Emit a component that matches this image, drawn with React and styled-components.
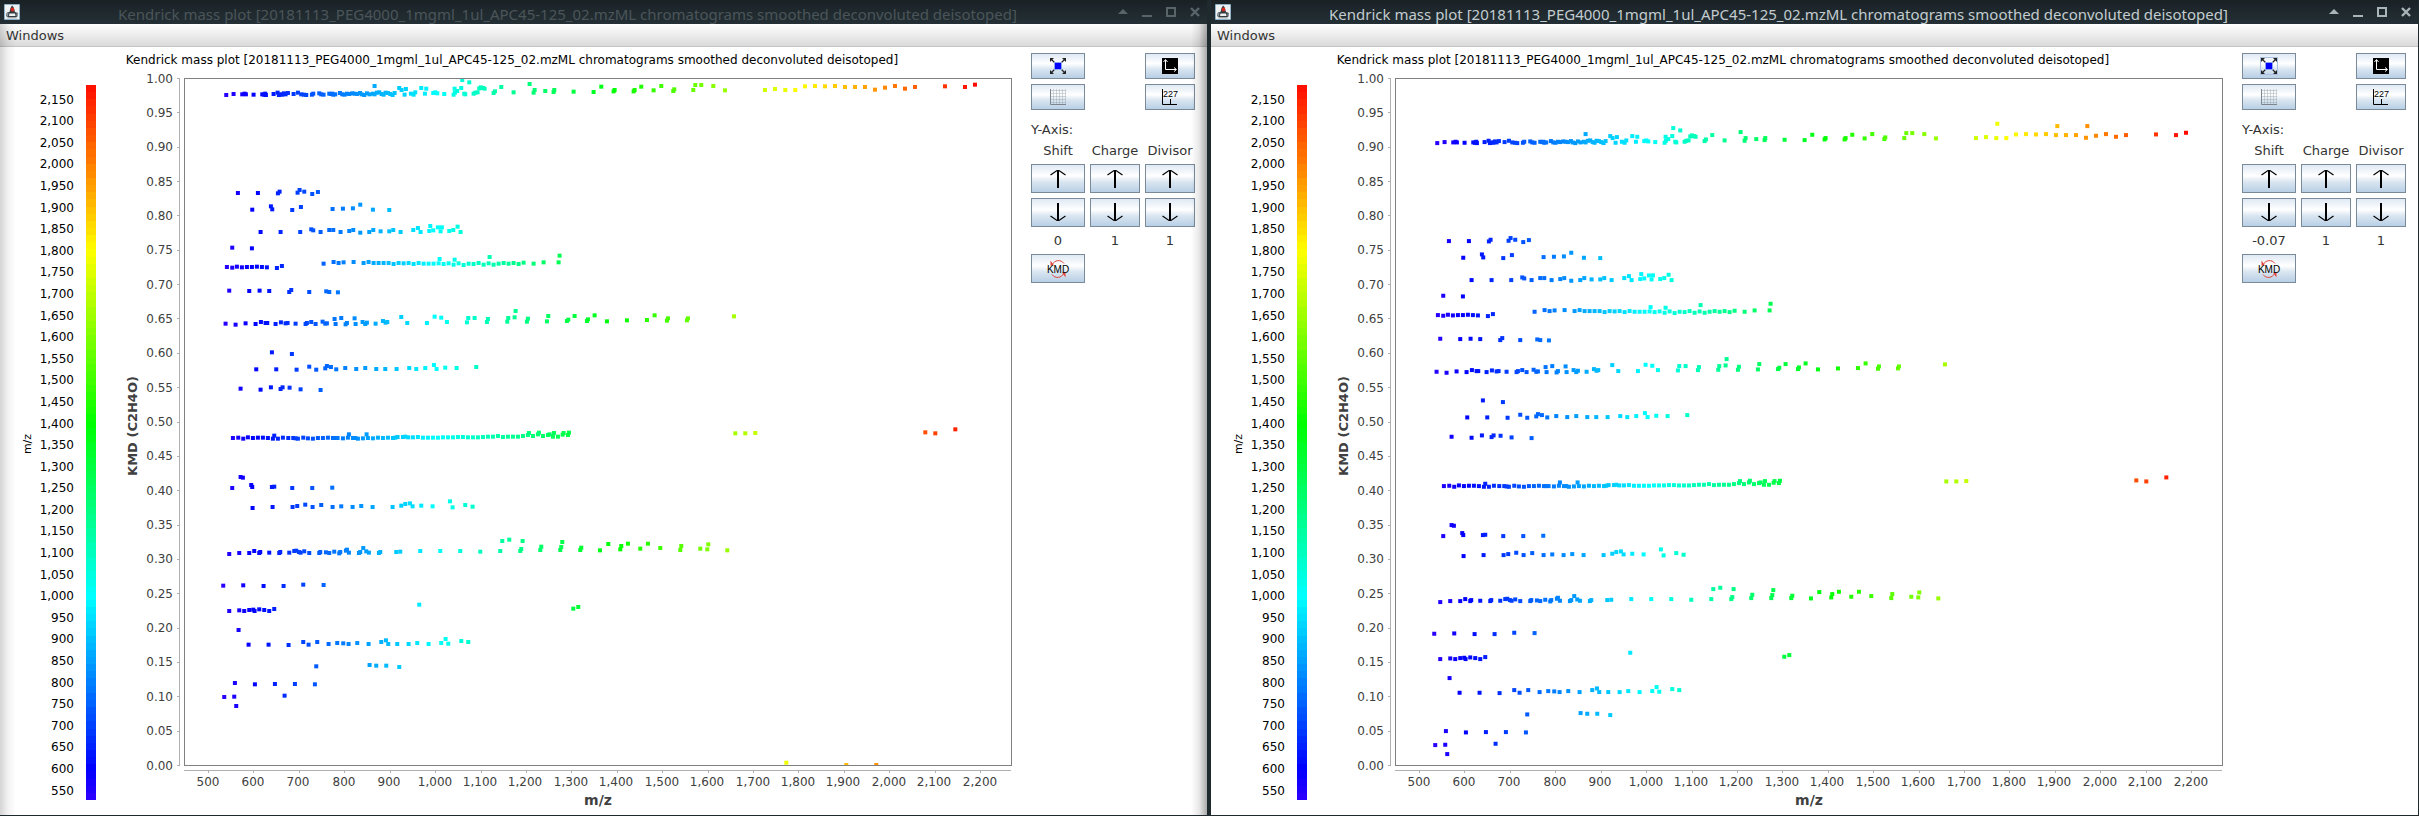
import React, { useLayoutEffect, useRef, useState } from 'react';
import styled, { createGlobalStyle } from 'styled-components';

const GlobalStyle = createGlobalStyle`
  * { box-sizing: border-box; }
  body {
    margin: 0;
    background: #1f2a2f;
    font-family: "DejaVu Sans", Verdana, sans-serif;
    font-size: 13px;
    color: #333;
  }
`;

const TITLE =
  'Kendrick mass plot [20181113_PEG4000_1mgml_1ul_APC45-125_02.mzML chromatograms smoothed deconvoluted deisotoped]';

/* ---------- feature data ---------- */

const BANDS = [
  { origin: 60, cells: [
    78,105,100,102,126,103,133,101,137,103,160,104,186,103,191,104,195,101,197,105,220,102,232,98,236,105,240,103,
    246,104,251,100,256,103,263,99,280,102,293,98,303,103,311,104,318,105,335,104,339,101,357,100,363,103,370,104,
    387,101,392,102,399,104,405,103,396,101,419,99,426,103,433,104,440,101,447,102,456,100,463,101,470,102,479,99,
    484,103,492,105,500,100,508,103,518,101,523,78,523,103,530,98,537,97,544,102,550,104,556,98,563,99,570,102,
    577,105,583,99,597,84,604,90,617,87,613,104,632,101,640,104,645,97,663,84,678,86,674,101,699,99,705,97,711,100,
    732,102,763,86,783,84,786,60,760,104,764,98,771,93,792,101,795,103,807,67,820,101,825,98,832,97,837,85,842,82,
    848,84,853,86,880,99,884,94,903,81,940,97,988,72,1000,98,1003,90,1035,93,1060,96,1062,90,1120,95,1180,96,
    1203,80,1240,94,1243,90,1300,94,1303,90,1323,80,1360,91,1383,78,1419,93,1422,88,1479,90,1485,75,1503,75,
    1539,78,1574,91,1694,90,1724,87,1755,90,1785,90,1814,79,1844,78,1874,79,1904,78,1934,81,1964,81,1994,81,
    2024,89,2054,83,2084,78,2114,86,2144,81,2234,79,2294,81,2324,74,
    113,399,173,399,233,400,238,395,292,398,298,390,312,395,336,402,353,396,
    156,449,212,439,216,448,276,450,302,441,397,447,428,446,458,445,480,434,518,449,567,450,
    181,516,241,516,300,516,333,508,339,511,361,516,387,510,399,510,421,516,447,513,459,510,480,518,507,516,
    519,510,541,514,567,514,579,510,601,516,639,510,653,504,661,516,687,513,690,498,699,511,713,502,725,502,
    721,514,747,513,759,510,772,500,781,516,
  ] },
  { origin: 240, cells: [
    96,23,155,25,
    80,81,96,83,110,80,125,82,140,81,155,81,170,80,185,81,200,82,230,84,245,78,370,71,400,66,415,69,430,67,460,66,
    490,69,505,66,520,69,535,69,550,69,565,69,580,72,595,69,610,70,625,69,640,72,655,69,670,71,685,71,700,71,
    715,70,718,57,730,72,745,70,760,74,763,59,775,70,790,75,805,71,820,72,835,69,850,74,865,70,868,51,880,74,
    895,71,910,69,925,71,940,69,955,72,970,68,1000,71,1030,67,1075,67,1078,47,
    87,152,147,153,178,152,207,153,267,156,273,150,327,156,378,154,387,156,413,157,
    76,251,106,254,136,250,166,252,182,246,196,249,201,249,226,252,242,247,256,250,262,249,286,251,316,252,
    320,249,333,246,346,252,367,245,375,251,380,250,403,237,406,252,423,234,436,253,440,249,463,235,466,252,
    487,246,495,252,500,248,526,251,548,243,556,248,561,246,603,231,621,249,680,249,703,230,723,233,740,246,
    800,247,804,234,823,234,860,246,863,237,921,245,924,234,943,232,946,213,980,245,983,236,1040,244,1044,228,
    1100,243,1104,239,1123,228,1160,243,1163,238,1183,226,1220,244,1280,241,1340,240,1363,226,1400,242,1403,235,
    1460,241,1463,235,1601,229,
    215,337,275,342,
    168,388,228,388,289,389,327,380,348,389,375,385,380,378,392,381,408,388,435,384,468,387,495,384,528,387,
    555,387,589,387,627,384,648,387,675,384,701,375,709,387,735,383,769,384,828,381,
    121,446,181,449,212,442,241,447,247,442,268,443,301,448,361,450,
  ] },
  { origin: 430, cells: [
    98,24,114,23,129,26,143,22,158,24,173,23,188,23,203,24,218,26,222,17,233,26,248,23,264,24,279,24,286,25,293,26,
    309,23,323,25,338,26,353,24,368,24,383,23,398,24,405,24,412,24,428,25,443,23,446,13,458,24,465,24,473,26,
    488,25,499,13,503,24,518,25,533,23,548,24,563,23,578,24,585,23,592,21,608,21,615,20,624,22,638,22,653,21,
    668,23,683,23,698,23,713,23,728,22,743,22,758,22,773,21,788,21,803,22,818,22,833,22,848,21,863,20,878,20,
    893,18,908,21,923,20,938,20,953,20,968,18,983,15,986,9,998,18,1013,13,1016,8,1028,18,1043,15,1048,13,
    1058,20,1061,9,1073,20,1087,14,1090,9,1103,15,1106,8,1605,10,1635,10,1665,9,2175,7,2205,10,2265,-2,
    96,174,121,141,128,143,153,165,156,171,215,171,222,170,276,174,336,174,396,173,
    157,234,217,231,277,231,291,228,315,224,337,231,363,225,397,231,423,229,457,231,483,228,517,231,577,231,
    603,227,615,222,629,220,637,229,663,227,697,229,749,214,757,232,795,225,817,230,
    87,372,117,369,147,369,162,363,177,369,180,366,207,368,237,369,240,366,267,368,282,363,288,362,296,366,
    301,368,312,364,327,369,357,369,360,366,377,367,387,369,402,365,417,370,420,366,437,362,440,359,446,368,
    476,369,480,366,489,354,498,364,506,368,536,369,540,366,588,366,600,365,660,363,720,363,780,363,840,365,
    900,363,906,333,927,329,967,333,960,363,963,357,1020,360,1023,350,1080,360,1083,351,1086,336,1140,360,
    1143,353,1199,361,1224,342,1260,358,1263,348,1283,341,1320,356,1343,341,1380,354,1440,360,1443,348,
    1500,356,1521,358,1524,343,1581,361,
  ] },
  { origin: 560, cells: [
    69,77,129,76,190,78,250,78,309,74,370,75,
    87,153,117,151,132,153,147,150,159,149,163,153,177,148,192,150,207,153,222,147,657,134,1119,146,1134,141,
    115,210,
    145,254,205,254,265,255,309,246,325,254,351,246,385,252,411,249,429,250,445,252,471,249,505,252,543,246,
    557,241,564,252,591,252,625,252,651,249,685,252,723,249,736,237,744,251,783,243,804,246,
    348,319,508,315,528,317,558,317,597,321,
    104,369,164,373,224,372,284,372,344,373,
    72,411,102,410,253,407,108,438,
    1758,608,1938,615,2028,615,
  ] },
];

const toFeatures = (bands) =>
  bands.flatMap(({ origin, cells }) => {
    const out = [];
    for (let i = 0; i < cells.length; i += 2) {
      out.push({
        mz: 500 + (cells[i] - 25) / 1.3623,
        kmd: 1 - (origin * 3 + cells[i + 1] - 235.5) / 2061,
      });
    }
    return out;
  });

const FEATURES = toFeatures(BANDS);

const MZ_MIN = 447;
const MZ_MAX = 2268;
const LEGEND_MIN = 528;
const LEGEND_MAX = 2184;

const massColor = (mz) => `hsl(${Math.max(0, Math.round(240 - (mz - 600) * 0.15))}, 100%, 50%)`;
const range = (from, to, step) =>
  Array.from({ length: Math.round((to - from) / step) + 1 }, (_, i) => from + i * step);
const thousands = (n) => n.toLocaleString('en-US');

/* ---------- page ---------- */

const Desktop = styled.div`
  display: flex;
  gap: 4px;
  min-height: 100vh;
  padding: 0 1px 1px 0;
  background: #1f2a2f;
`;

const Frame = styled.section`
  position: relative;
  flex: 1 1 0;
  min-width: 0;
  display: flex;
  flex-direction: column;
  background: #fff;
`;

const SideShadow = styled.div`
  position: absolute;
  top: 24px;
  bottom: 0;
  width: 16px;
  pointer-events: none;
  ${(p) =>
    p.$side === 'left'
      ? 'left: 0; background: linear-gradient(to right, rgba(0,0,0,.17), rgba(0,0,0,.05) 50%, transparent);'
      : 'right: 0; background: linear-gradient(to left, rgba(0,0,0,.33), rgba(0,0,0,.09) 50%, transparent);'}
`;

const TitleBar = styled.header`
  display: flex;
  align-items: center;
  height: 24px;
  background: linear-gradient(#1a2125, #243036);
  color: ${(p) => (p.$active ? '#c3cccf' : '#4b5559')};
`;

const AppIcon = styled.span`
  width: 24px;
  height: 24px;
  padding: 4px;
  svg { display: block; }
`;

const TitleText = styled.h1`
  flex: 1;
  min-width: 0;
  margin: 0;
  padding-top: 4px;
  overflow: hidden;
  text-align: center;
  white-space: nowrap;
  font: 400 15px/20px "Noto Sans", sans-serif;
`;

const FrameButton = styled.button`
  width: 24px;
  height: 24px;
  padding: 0;
  border: 0;
  background: none;
  color: ${(p) => (p.$active ? '#a9b4b8' : '#59646a')};
  svg { display: block; margin: 0 auto; }
`;

const MenuBar = styled.nav`
  height: 23px;
  padding-left: 6px;
  background: linear-gradient(#fff, #dadada);
  border-bottom: 1px solid #c4c4c4;
`;

const MenuButton = styled.button`
  height: 22px;
  padding: 0;
  border: 0;
  background: none;
  color: #333;
  font: inherit;
`;

const Content = styled.main`
  flex: 1;
  display: flex;
  min-height: 500px;
`;

const ChartArea = styled.div`
  flex: 1;
  min-width: 0;
  overflow: hidden;
  svg { display: block; }
`;

const Controls = styled.aside`
  display: grid;
  grid-template-columns: 54px 50px 50px;
  grid-template-rows: 26px 26px 23px 16px 29px 29px 17px 29px;
  gap: 5px;
  padding: 6px 12px 6px 7px;
`;

const ToolButton = styled.button`
  display: grid;
  place-items: center;
  grid-column: ${(p) => p.$col};
  padding: 0;
  border: 1px solid #7a8a99;
  background: linear-gradient(#dfe9f4, #fff 40%, #dae6f1 62%, #b8cfe5);
  svg { display: block; outline: ${(p) => (p.$focused ? '1px solid #a9c0e0' : 'none')}; }
`;

const AxisHeading = styled.div`
  grid-column: 1 / -1;
  padding-top: 6px;
  line-height: 17px;
`;

const ColumnLabel = styled.label`
  text-align: center;
  line-height: 16px;
  white-space: nowrap;
`;

const Value = styled.output`
  text-align: center;
  line-height: 17px;
`;

/* ---------- icons ---------- */

const JavaIcon = () => (
  <svg width="16" height="16" viewBox="0 0 16 16" aria-hidden="true">
    <rect width="16" height="16" rx="1" fill="#8fb2c9" />
    <rect x="1" y="1" width="14" height="14" fill="#eef1f2" />
    <path d="M8 1.500 L9.500 3 L11 8 L14 9 V12 L11.500 13.500 H4.500 L2 12 L3 8.500 L5.500 8 L6.500 4 Z" fill="#343b40" />
    <path d="M2 9 L4.500 9 L4 12.500 L2.500 12 Z M12.500 9 L14 9.500 V12 H12.500 Z" fill="#8b979c" />
    <path d="M5.500 9.500 H11 L11.500 12 H5 Z" fill="#eef1f2" />
    <path d="M3 14 H13" stroke="#aeb8bd" />
    <ellipse cx="8.500" cy="5.500" rx="1.800" ry="2" fill="#d8261e" />
  </svg>
);

const FRAME_ICONS = {
  Shade: <path d="M0 7 L5 2 L10 7 Z" fill="currentColor" />,
  Minimize: <path d="M0 8 H10 V10 H0 Z" fill="currentColor" />,
  Maximize: <path d="M1 1 H9 V9 H1 Z" fill="none" stroke="currentColor" strokeWidth="2" />,
  Close: <path d="M1 1 L9 9 M9 1 L1 9" fill="none" stroke="currentColor" strokeWidth="2.400" />,
};

const FitIcon = () => (
  <svg width="16" height="16" viewBox="0 0 16 16" aria-hidden="true">
    <path d="M1 1 L4.500 4.500 M15 1 L11.500 4.500 M1 15 L4.500 11.500 M15 15 L11.500 11.500" stroke="#222" strokeWidth="1.200" />
    <path d="M0 0 H4 L0 4 Z M16 0 H12 L16 4 Z M0 16 H4 L0 12 Z M16 16 H12 L16 12 Z" fill="#222" />
    <rect x="4" y="4" width="8" height="8" fill="#8aa6f0" />
    <rect x="5" y="5" width="6" height="6" fill="#0000ff" />
  </svg>
);

const AxesIcon = () => (
  <svg width="16" height="16" viewBox="0 0 16 16" aria-hidden="true">
    <rect width="16" height="16" fill="#000" />
    <path d="M3.500 2 V11.500 H14 M1.500 4 L3.500 1.500 L5.500 4 M12 9.500 L14.500 11.500 L12 13.500" fill="none" stroke="#fff" />
  </svg>
);

const GridIcon = () => (
  <svg width="16" height="16" viewBox="0 0 16 16" aria-hidden="true">
    <path d="M3.500 0 V15 M6.500 0 V15 M9.500 0 V15 M12.500 0 V15 M15.500 0 V15 M1 1.500 H16 M1 4.500 H16 M1 7.500 H16 M1 10.500 H16 M1 13.500 H16" stroke="#8b949c" strokeOpacity=".35" />
    <path d="M0.500 0 V15.500 H16" fill="none" stroke="#7d868e" />
  </svg>
);

const AnnotationIcon = () => (
  <svg width="16" height="16" viewBox="0 0 16 16" aria-hidden="true">
    <path d="M0.500 0 V15.500 H15 M8.500 10 V15" fill="none" stroke="#000" />
    <text x="8.500" y="8" textAnchor="middle" fontSize="9" fontFamily="Liberation Sans, sans-serif">227</text>
  </svg>
);

const ArrowIcon = ({ down }) => (
  <svg width="16" height="19" viewBox="0 0 16 19" aria-hidden="true">
    <g transform={down ? 'rotate(180 8 9.500)' : undefined} fill="none" stroke="#000">
      <path d="M8 1 V19" strokeWidth="2" />
      <path d="M0.500 6 L7 1.500 H9 L15.500 6" strokeWidth="1.200" />
    </g>
  </svg>
);

const KmdIcon = () => (
  <svg width="24" height="20" viewBox="0 0 24 20" aria-hidden="true">
    <path d="M6 6 A7.500 9 0 0 1 18 4.500 M18 14 A7.500 9 0 0 1 6 15.500" fill="none" stroke="#e2443a" />
    <path d="M4.500 1.500 V6.500 H8 Z M19.500 18.500 V13.500 H16 Z" fill="#e2443a" />
    <text x="12" y="14" textAnchor="middle" fontSize="10" fontFamily="Liberation Sans, sans-serif">KMD</text>
  </svg>
);

/* ---------- chart ---------- */

const useSize = () => {
  const ref = useRef(null);
  const [size, setSize] = useState({ width: 0, height: 0 });
  useLayoutEffect(() => {
    const measure = () => {
      const box = ref.current.getBoundingClientRect();
      setSize({ width: Math.round(box.width), height: Math.round(box.height) });
    };
    measure();
    window.addEventListener('resize', measure);
    return () => window.removeEventListener('resize', measure);
  }, []);
  return [ref, size];
};

const Legend = ({ height }) => {
  const top = 38;
  const bottom = height - 15;
  const steps = 100;
  const yOf = (mz) => bottom - ((mz - LEGEND_MIN) / (LEGEND_MAX - LEGEND_MIN)) * (bottom - top);
  return (
    <g fontSize="12" fill="#000">
      {range(0, steps - 1, 1).map((i) => {
        const y0 = Math.round(top + ((bottom - top) * i) / steps);
        const y1 = Math.round(top + ((bottom - top) * (i + 1)) / steps);
        const mz = LEGEND_MAX - ((LEGEND_MAX - LEGEND_MIN) * (i + 0.5)) / steps;
        return <rect key={i} x="86" y={y0} width="10" height={y1 - y0} fill={massColor(mz)} />;
      })}
      {range(550, 2150, 50).map((mz) => (
        <text key={mz} x="74" y={Math.round(yOf(mz)) + 4} textAnchor="end">{thousands(mz)}</text>
      ))}
      <text transform={`translate(31 ${Math.round((top + bottom) / 2) + 1}) rotate(-90)`} textAnchor="middle" fontSize="11">m/z</text>
    </g>
  );
};

const KendrickChart = ({ shift, clipId }) => {
  const [ref, { width, height }] = useSize();
  const left = 184;
  const top = 31;
  const right = width - 13;
  const bottom = height - 50;
  const xOf = (mz) => left + 0.5 + ((mz - MZ_MIN) / (MZ_MAX - MZ_MIN)) * (right - left);
  const yOf = (kmd) => bottom + 0.5 - kmd * (bottom - top);
  return (
    <ChartArea ref={ref}>
      {width > 240 && height > 120 && (
        <svg width={width} height={height} role="img" aria-label="Kendrick mass plot" fontFamily="DejaVu Sans, sans-serif">
          <text x={Math.round(width / 2)} y="17" textAnchor="middle" fontSize="12" fill="#000">{TITLE}</text>
          <Legend height={height} />
          <g stroke="#b0b0b0" fill="none">
            <path d={`M179.500 ${top} V${bottom + 1}`} />
            <path d={`M${left} ${bottom + 5.5} H${right}`} />
            {range(0, 20, 1).map((i) => (
              <path key={i} d={`M177 ${Math.floor(yOf(i / 20)) + 0.5} H179`} />
            ))}
            {range(500, 2200, 100).map((mz) => (
              <path key={mz} d={`M${Math.floor(xOf(mz)) + 0.5} ${bottom + 6} V${bottom + 8}`} />
            ))}
          </g>
          <g fontSize="12" fill="#404040">
            {range(0, 20, 1).map((i) => (
              <text key={i} x="173" y={Math.round(yOf(i / 20)) + 4} textAnchor="end">{(i / 20).toFixed(2)}</text>
            ))}
            {range(500, 2200, 100).map((mz) => (
              <text key={mz} x={Math.round(xOf(mz)) - 1} y={bottom + 21} textAnchor="middle">{thousands(mz)}</text>
            ))}
          </g>
          <g fontWeight="700" fill="#404040" textAnchor="middle">
            <text x={Math.round((left + right) / 2)} y={bottom + 40} fontSize="14">m/z</text>
            <text transform={`translate(137 ${Math.round((top + bottom) / 2) + 4}) rotate(-90)`} fontSize="13">KMD (C2H4O)</text>
          </g>
          <clipPath id={clipId}>
            <rect x={left} y={top} width={right - left} height={bottom - top} />
          </clipPath>
          <g clipPath={`url(#${clipId})`}>
            {FEATURES.map(({ mz, kmd }, i) => {
              const shifted = (kmd + shift + 1) % 1 || 0;
              return (
                <rect key={i} x={xOf(mz) - 2} y={yOf(shifted) - 2} width="4" height="4" fill={massColor(mz)} />
              );
            })}
          </g>
          <rect x={left + 0.5} y={top + 0.5} width={right - left} height={bottom - top} fill="none" stroke="#808080" />
        </svg>
      )}
    </ChartArea>
  );
};

/* ---------- window ---------- */

const COLUMNS = ['Shift', 'Charge', 'Divisor'];

const PlotWindow = ({ id, active, shift, values, focusFit }) => (
  <Frame>
    <TitleBar $active={active}>
      <AppIcon><JavaIcon /></AppIcon>
      <TitleText>{TITLE}</TitleText>
      {Object.entries(FRAME_ICONS).map(([name, icon]) => (
        <FrameButton key={name} $active={active} aria-label={name}>
          <svg width="10" height="10" viewBox="0 0 10 10" aria-hidden="true">{icon}</svg>
        </FrameButton>
      ))}
    </TitleBar>
    <MenuBar><MenuButton>Windows</MenuButton></MenuBar>
    <Content>
      <KendrickChart shift={shift} clipId={`${id}-plot`} />
      <Controls>
        <ToolButton $col={1} $focused={focusFit} aria-label="Fit to window"><FitIcon /></ToolButton>
        <ToolButton $col={3} aria-label="Axes"><AxesIcon /></ToolButton>
        <ToolButton $col={1} aria-label="Grid"><GridIcon /></ToolButton>
        <ToolButton $col={3} aria-label="Annotations"><AnnotationIcon /></ToolButton>
        <AxisHeading>Y-Axis:</AxisHeading>
        {COLUMNS.map((c) => (
          <ColumnLabel key={c} htmlFor={`${id}-${c}`}>{c}</ColumnLabel>
        ))}
        {COLUMNS.map((c, i) => (
          <ToolButton key={c} $col={i + 1} aria-label={`${c} up`}><ArrowIcon /></ToolButton>
        ))}
        {COLUMNS.map((c, i) => (
          <ToolButton key={c} $col={i + 1} aria-label={`${c} down`}><ArrowIcon down /></ToolButton>
        ))}
        {COLUMNS.map((c, i) => (
          <Value key={c} id={`${id}-${c}`}>{values[i]}</Value>
        ))}
        <ToolButton $col={1} aria-label="Toggle KMD"><KmdIcon /></ToolButton>
      </Controls>
    </Content>
    {!active && (
      <>
        <SideShadow $side="left" />
        <SideShadow $side="right" />
      </>
    )}
  </Frame>
);

export default function App() {
  return (
    <>
      <GlobalStyle />
      <Desktop>
        <PlotWindow id="original" shift={0} values={['0', '1', '1']} />
        <PlotWindow id="shifted" active focusFit shift={-0.07} values={['-0.07', '1', '1']} />
      </Desktop>
    </>
  );
}
